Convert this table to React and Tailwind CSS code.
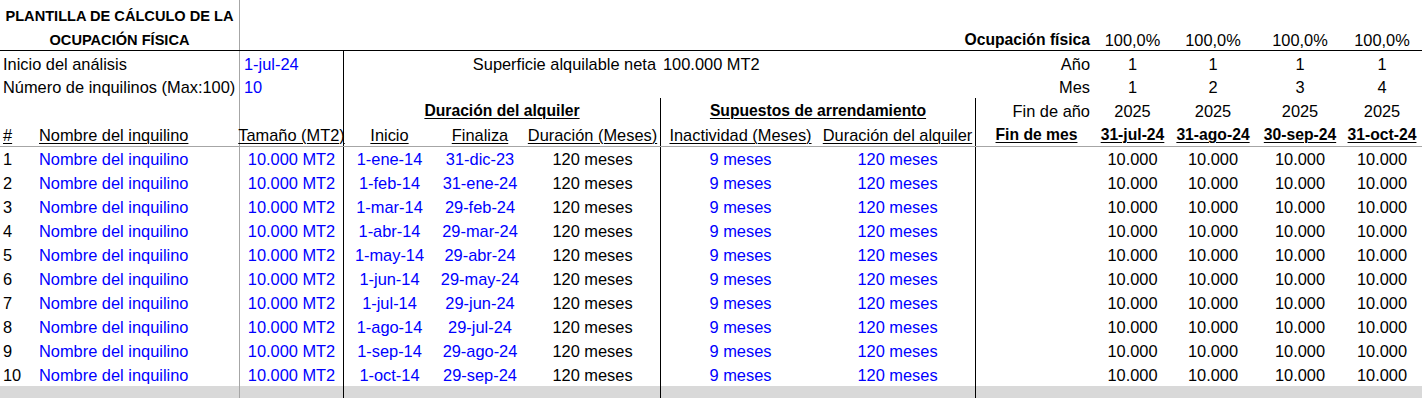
import React from 'react';

const BLUE = 'text-[#0000ff]';
const GRAY = 'border-l border-[#a6a6a6]';
const BLK = 'border-l border-black';
const UL = 'underline underline-offset-[2px] decoration-1';

function C({ w, b = '', a = 'justify-start', cls = '', pt = 'pt-[2px]', children }) {
  return (
    <div className={`${w} shrink-0 flex items-center ${a} ${pt} whitespace-nowrap leading-[20px] ${b} ${cls}`}>
      {children}
    </div>
  );
}

const RIGHT = ['w-[71px]', 'w-[90px]', 'w-[84px]', 'w-[80px]'];

function RightVals({ vals, cls = '', pt }) {
  return vals.map((v, i) => (
    <C key={i} w={RIGHT[i]} a="justify-center" cls={cls} pt={pt}>
      {v}
    </C>
  ));
}

const starts = ['1-ene-14', '1-feb-14', '1-mar-14', '1-abr-14', '1-may-14', '1-jun-14', '1-jul-14', '1-ago-14', '1-sep-14', '1-oct-14'];
const ends = ['31-dic-23', '31-ene-24', '29-feb-24', '29-mar-24', '29-abr-24', '29-may-24', '29-jun-24', '29-jul-24', '29-ago-24', '29-sep-24'];

export default function App() {
  return (
    <div className="w-[1422px] h-[398px] overflow-hidden bg-white text-black font-['Liberation_Sans',Arial,sans-serif] text-[16.4px]">
      {/* Row 0 */}
      <div className="flex h-[25px]">
        <C w="w-[239px]" a="justify-center" pt="pt-[7px]" cls="font-bold text-[14.6px]">
          PLANTILLA DE CÁLCULO DE LA
        </C>
        <C w="w-[104px]" b={GRAY} pt="pt-[7px]" />
      </div>
      {/* Row 1 */}
      <div className="flex h-[25px]">
        <C w="w-[239px]" a="justify-center" pt="pt-[5px]" cls="font-bold text-[14.6px]">
          OCUPACIÓN FÍSICA
        </C>
        <C w="w-[104px]" b={GRAY} pt="pt-[5px]" />
        <C w="w-[317px]" pt="pt-[5px]" />
        <C w="w-[315px]" pt="pt-[5px]" />
        <C w="w-[122px]" a="justify-end" pt="pt-[5px]" cls="pr-[7px] font-bold text-[15.7px]">
          Ocupación física
        </C>
        <RightVals vals={['100,0%', '100,0%', '100,0%', '100,0%']} pt="pt-[5px]" />
      </div>
      {/* Row 2 */}
      <div className="flex h-[24px] border-t border-black">
        <C w="w-[239px]" cls="pl-[3px]">Inicio del análisis</C>
        <C w="w-[104px]" b={GRAY} cls={`pl-[4px] ${BLUE}`}>1-jul-24</C>
        <C w="w-[317px]" b={BLK} a="justify-end" cls="pr-[4px]">Superficie alquilable neta</C>
        <C w="w-[315px]" cls="pl-[3px]">100.000 MT2</C>
        <C w="w-[122px]" a="justify-end" cls="pr-[7px]">Año</C>
        <RightVals vals={['1', '1', '1', '1']} />
      </div>
      {/* Row 3 */}
      <div className="flex h-[24px]">
        <C w="w-[239px]" cls="pl-[3px]">Número de inquilinos (Max:100)</C>
        <C w="w-[104px]" b={GRAY} cls={`pl-[4px] ${BLUE}`}>10</C>
        <C w="w-[317px]" b={BLK} />
        <C w="w-[315px]" />
        <C w="w-[122px]" a="justify-end" cls="pr-[7px]">Mes</C>
        <RightVals vals={['1', '2', '3', '4']} />
      </div>
      {/* Row 4 */}
      <div className="flex h-[24px]">
        <C w="w-[239px]" />
        <C w="w-[104px]" b={GRAY} />
        <C w="w-[317px]" b={BLK} a="justify-center" cls={`font-bold text-[15.7px] ${UL}`}>
          Duración del alquiler
        </C>
        <C w="w-[315px]" b={BLK} a="justify-center" cls={`font-bold text-[15.7px] ${UL}`}>
          Supuestos de arrendamiento
        </C>
        <C w="w-[122px]" b={BLK} a="justify-end" cls="pr-[7px]">Fin de año</C>
        <RightVals vals={['2025', '2025', '2025', '2025']} />
      </div>
      {/* Row 5 */}
      <div className="flex h-[24px]">
        <C w="w-[36px]" cls={`pl-[3px] ${UL}`}>#</C>
        <C w="w-[203px]" cls={`pl-[3px] ${UL}`}>Nombre del inquilino</C>
        <C w="w-[104px]" b={GRAY} a="justify-center" cls={UL}>Tamaño (MT2)</C>
        <C w="w-[92px]" b={BLK} a="justify-center" cls={UL}>Inicio</C>
        <C w="w-[90px]" a="justify-center" cls={UL}>Finaliza</C>
        <C w="w-[135px]" a="justify-center" cls={UL}>Duración (Meses)</C>
        <C w="w-[160px]" b={BLK} a="justify-center" cls={UL}>Inactividad (Meses)</C>
        <C w="w-[155px]" a="justify-center" cls={UL}>Duración del alquiler</C>
        <C w="w-[122px]" b={BLK} a="justify-center" cls={`font-bold text-[15.7px] ${UL}`}>Fin de mes</C>
        <RightVals
          vals={['31-jul-24', '31-ago-24', '30-sep-24', '31-oct-24']}
          cls={`font-bold text-[15.7px] ${UL}`}
        />
      </div>
      {/* Data rows */}
      <div className="border-t border-[#a6a6a6]">
        {starts.map((s, i) => (
          <div key={i} className={`flex ${i === 0 ? 'h-[23px]' : 'h-[24px]'}`}>
            <C w="w-[36px]" cls="pl-[3px]" pt={i === 0 ? 'pt-[1px]' : 'pt-[2px]'}>{i + 1}</C>
            <C w="w-[203px]" cls={`pl-[3px] ${BLUE}`} pt={i === 0 ? 'pt-[1px]' : 'pt-[2px]'}>Nombre del inquilino</C>
            <C w="w-[104px]" b={GRAY} a="justify-center" cls={BLUE} pt={i === 0 ? 'pt-[1px]' : 'pt-[2px]'}>10.000 MT2</C>
            <C w="w-[92px]" b={BLK} a="justify-center" cls={BLUE} pt={i === 0 ? 'pt-[1px]' : 'pt-[2px]'}>{s}</C>
            <C w="w-[90px]" a="justify-center" cls={BLUE} pt={i === 0 ? 'pt-[1px]' : 'pt-[2px]'}>{ends[i]}</C>
            <C w="w-[135px]" a="justify-center" pt={i === 0 ? 'pt-[1px]' : 'pt-[2px]'}>120 meses</C>
            <C w="w-[160px]" b={BLK} a="justify-center" cls={BLUE} pt={i === 0 ? 'pt-[1px]' : 'pt-[2px]'}>9 meses</C>
            <C w="w-[155px]" a="justify-center" cls={BLUE} pt={i === 0 ? 'pt-[1px]' : 'pt-[2px]'}>120 meses</C>
            <C w="w-[122px]" b={BLK} pt={i === 0 ? 'pt-[1px]' : 'pt-[2px]'} />
            <RightVals vals={['10.000', '10.000', '10.000', '10.000']} pt={i === 0 ? 'pt-[1px]' : 'pt-[2px]'} />
          </div>
        ))}
      </div>
      {/* Bottom band */}
      <div className="flex h-[12px] bg-[#d9d9d9]">
        <div className="w-[239px] shrink-0" />
        <div className={`w-[104px] shrink-0 ${GRAY}`} />
        <div className={`w-[317px] shrink-0 ${BLK}`} />
        <div className={`w-[315px] shrink-0 ${BLK}`} />
        <div className={`w-[122px] shrink-0 ${BLK}`} />
      </div>
    </div>
  );
}
